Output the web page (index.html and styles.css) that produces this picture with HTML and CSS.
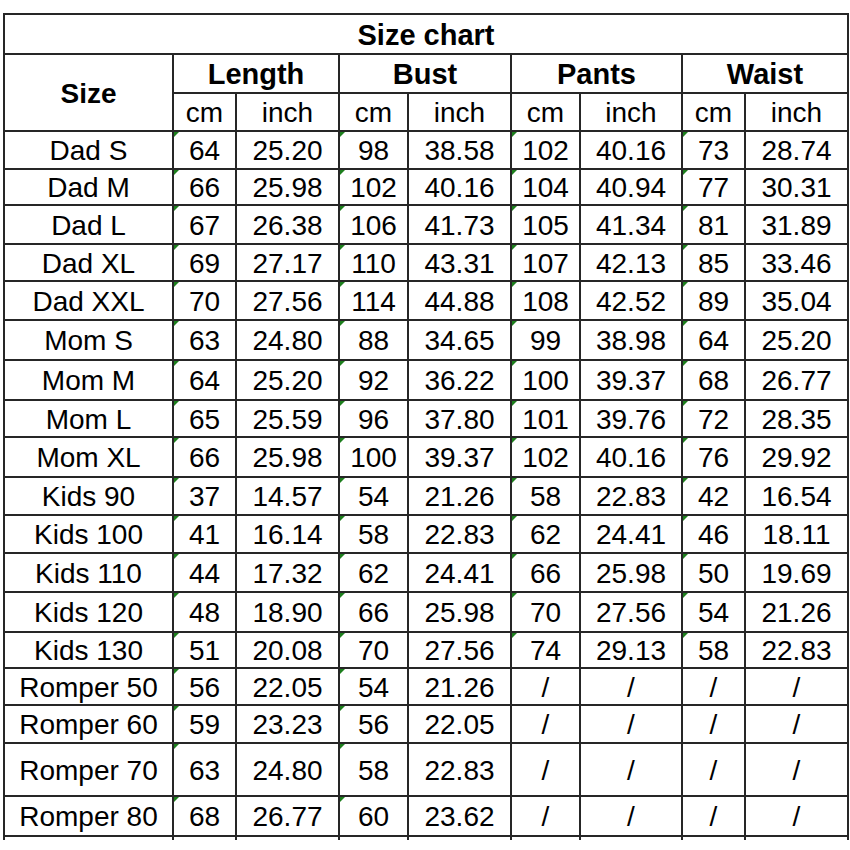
FILE: index.html
```html
<!DOCTYPE html>
<html>
<head>
<meta charset="utf-8">
<title>Size chart</title>
<link rel="stylesheet" href="styles.css">
</head>
<body>
<div class="chart">
  <div class="cell title bold">Size chart</div>
  <div class="cell size-head bold">Size</div>
  <div class="cell group bold">Length</div>
  <div class="cell group bold">Bust</div>
  <div class="cell group bold">Pants</div>
  <div class="cell group bold">Waist</div>
  <div class="cell">cm</div><div class="cell">inch</div>
  <div class="cell">cm</div><div class="cell">inch</div>
  <div class="cell">cm</div><div class="cell">inch</div>
  <div class="cell">cm</div><div class="cell">inch</div>

  <div class="cell">Dad S</div><div class="cell mark">64</div><div class="cell">25.20</div><div class="cell mark">98</div><div class="cell">38.58</div><div class="cell mark">102</div><div class="cell">40.16</div><div class="cell mark">73</div><div class="cell">28.74</div>
  <div class="cell">Dad M</div><div class="cell mark">66</div><div class="cell">25.98</div><div class="cell mark">102</div><div class="cell">40.16</div><div class="cell mark">104</div><div class="cell">40.94</div><div class="cell mark">77</div><div class="cell">30.31</div>
  <div class="cell">Dad L</div><div class="cell mark">67</div><div class="cell">26.38</div><div class="cell mark">106</div><div class="cell">41.73</div><div class="cell mark">105</div><div class="cell">41.34</div><div class="cell mark">81</div><div class="cell">31.89</div>
  <div class="cell">Dad XL</div><div class="cell mark">69</div><div class="cell">27.17</div><div class="cell mark">110</div><div class="cell">43.31</div><div class="cell mark">107</div><div class="cell">42.13</div><div class="cell mark">85</div><div class="cell">33.46</div>
  <div class="cell">Dad XXL</div><div class="cell mark">70</div><div class="cell">27.56</div><div class="cell mark">114</div><div class="cell">44.88</div><div class="cell mark">108</div><div class="cell">42.52</div><div class="cell mark">89</div><div class="cell">35.04</div>
  <div class="cell">Mom S</div><div class="cell mark">63</div><div class="cell">24.80</div><div class="cell mark">88</div><div class="cell">34.65</div><div class="cell mark">99</div><div class="cell">38.98</div><div class="cell mark">64</div><div class="cell">25.20</div>
  <div class="cell">Mom M</div><div class="cell mark">64</div><div class="cell">25.20</div><div class="cell mark">92</div><div class="cell">36.22</div><div class="cell mark">100</div><div class="cell">39.37</div><div class="cell mark">68</div><div class="cell">26.77</div>
  <div class="cell">Mom L</div><div class="cell mark">65</div><div class="cell">25.59</div><div class="cell mark">96</div><div class="cell">37.80</div><div class="cell mark">101</div><div class="cell">39.76</div><div class="cell mark">72</div><div class="cell">28.35</div>
  <div class="cell">Mom XL</div><div class="cell mark">66</div><div class="cell">25.98</div><div class="cell mark">100</div><div class="cell">39.37</div><div class="cell mark">102</div><div class="cell">40.16</div><div class="cell mark">76</div><div class="cell">29.92</div>
  <div class="cell">Kids 90</div><div class="cell mark">37</div><div class="cell">14.57</div><div class="cell mark">54</div><div class="cell">21.26</div><div class="cell mark">58</div><div class="cell">22.83</div><div class="cell mark">42</div><div class="cell">16.54</div>
  <div class="cell">Kids 100</div><div class="cell mark">41</div><div class="cell">16.14</div><div class="cell mark">58</div><div class="cell">22.83</div><div class="cell mark">62</div><div class="cell">24.41</div><div class="cell mark">46</div><div class="cell">18.11</div>
  <div class="cell">Kids 110</div><div class="cell mark">44</div><div class="cell">17.32</div><div class="cell mark">62</div><div class="cell">24.41</div><div class="cell mark">66</div><div class="cell">25.98</div><div class="cell mark">50</div><div class="cell">19.69</div>
  <div class="cell">Kids 120</div><div class="cell mark">48</div><div class="cell">18.90</div><div class="cell mark">66</div><div class="cell">25.98</div><div class="cell mark">70</div><div class="cell">27.56</div><div class="cell mark">54</div><div class="cell">21.26</div>
  <div class="cell">Kids 130</div><div class="cell mark">51</div><div class="cell">20.08</div><div class="cell mark">70</div><div class="cell">27.56</div><div class="cell mark">74</div><div class="cell">29.13</div><div class="cell mark">58</div><div class="cell">22.83</div>
  <div class="cell">Romper 50</div><div class="cell mark">56</div><div class="cell">22.05</div><div class="cell mark">54</div><div class="cell">21.26</div><div class="cell">/</div><div class="cell">/</div><div class="cell">/</div><div class="cell">/</div>
  <div class="cell">Romper 60</div><div class="cell mark">59</div><div class="cell">23.23</div><div class="cell mark">56</div><div class="cell">22.05</div><div class="cell">/</div><div class="cell">/</div><div class="cell">/</div><div class="cell">/</div>
  <div class="cell">Romper 70</div><div class="cell mark">63</div><div class="cell">24.80</div><div class="cell mark">58</div><div class="cell">22.83</div><div class="cell">/</div><div class="cell">/</div><div class="cell">/</div><div class="cell">/</div>
  <div class="cell">Romper 80</div><div class="cell mark">68</div><div class="cell">26.77</div><div class="cell mark">60</div><div class="cell">23.62</div><div class="cell">/</div><div class="cell">/</div><div class="cell">/</div><div class="cell">/</div>

  <div class="cell"></div><div class="cell"></div><div class="cell"></div><div class="cell"></div><div class="cell"></div><div class="cell"></div><div class="cell"></div><div class="cell"></div><div class="cell"></div>
</div>
</body>
</html>
```

FILE: styles.css
```css
html, body {
  margin: 0;
  padding: 0;
  background: #ffffff;
}

body {
  font-family: "Liberation Sans", Arial, sans-serif;
  color: #000;
}

.chart {
  display: grid;
  width: max-content;
  margin: 13px 0 0 3px;
  padding: 2px 2px 0 2px;
  background: #262626;
  gap: 2px;
  grid-template-columns: 167px 61px 101px 67px 101px 67px 100px 61px 101px;
  grid-template-rows:
    38px 37px 36px
    36px 34px 37px 35px 37px
    38px 38px 35px 38px
    36px 36px 37px 38px 34px
    35px 36px 51px 38px
    3px;
}

.cell {
  position: relative;
  background: #fff;
  display: flex;
  align-items: center;
  justify-content: center;
  padding-top: 2px;
  box-sizing: border-box;
  font-size: 28px;
  line-height: 1;
  white-space: nowrap;
  overflow: hidden;
}

.bold {
  font-weight: bold;
}

.title {
  grid-column: 1 / -1;
  font-size: 29px;
}

.size-head {
  grid-row: span 2;
}

.group {
  grid-column: span 2;
  font-size: 29px;
}

.mark::before {
  content: "";
  position: absolute;
  top: 0;
  left: 0;
  width: 0;
  height: 0;
  border-top: 5px solid #1d7f1d;
  border-right: 5px solid transparent;
}
```
